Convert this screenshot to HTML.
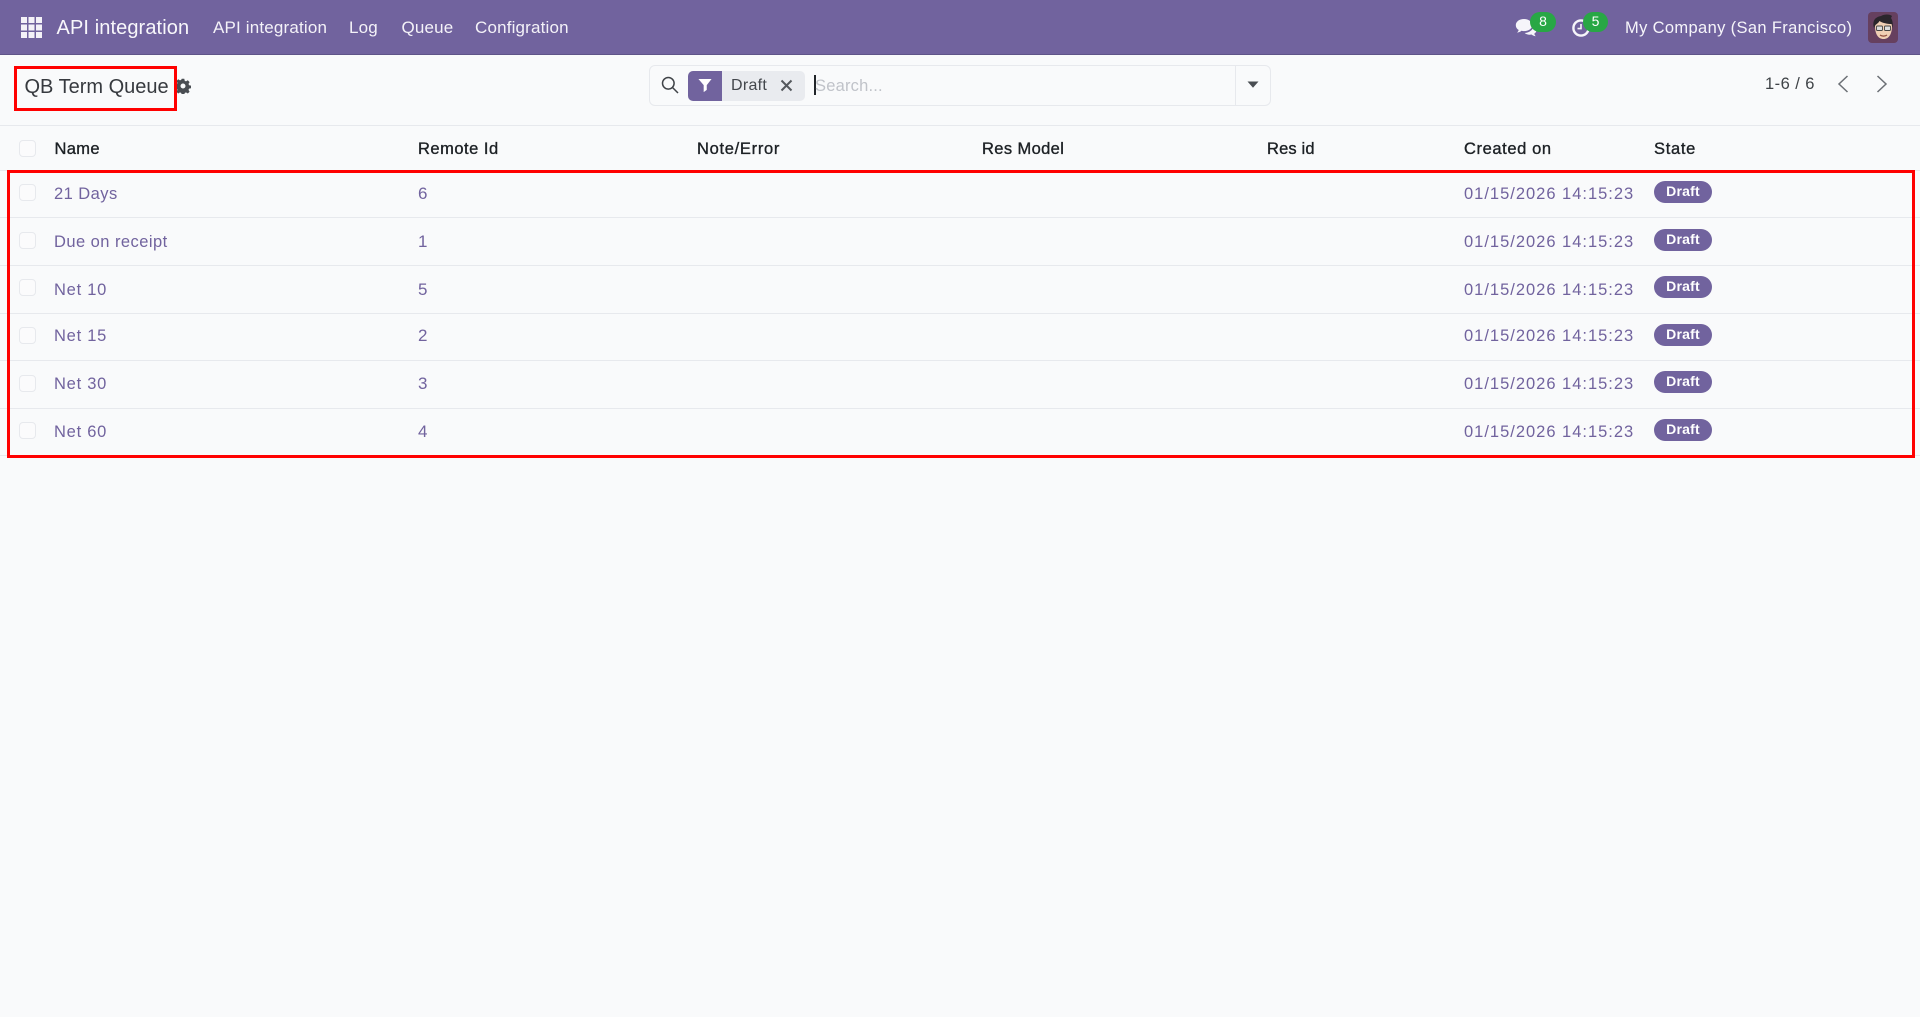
<!DOCTYPE html>
<html lang="en">
<head>
<meta charset="utf-8">
<title>QB Term Queue</title>
<style>
*{box-sizing:border-box}
html,body{margin:0;padding:0}
body{width:1920px;height:1017px;overflow:hidden;background:#f9fafb;font-family:"Liberation Sans",Arial,sans-serif;position:relative;color:#212529}
.t{position:absolute;white-space:nowrap;line-height:24px;height:24px}
.abs{position:absolute}
.nav{position:absolute;left:0;top:0;width:1920px;height:55px;background:#71639e;border-bottom:1px solid #5f5488}
.m{color:#f4f2f8;font-size:17px;letter-spacing:.17px}
.h{font-size:16.5px;letter-spacing:.35px;color:#1d2125;-webkit-text-stroke:.35px #1d2125}
.c{font-size:16.5px;letter-spacing:.45px;color:#71639e}
.n{font-size:16.5px;letter-spacing:.75px;color:#71639e}
.i{font-size:17px;color:#71639e}
.d{font-size:16.5px;letter-spacing:.99px;color:#71639e}
.line{position:absolute;left:0;width:1920px;height:1px;background:#e7e9ed}
.cb{position:absolute;left:19px;width:17px;height:17px;border:1px solid #e7e9ed;border-radius:4px;background:#fbfbfc}
.badge{position:absolute;left:1654px;width:58px;height:22px;border-radius:11px;background:#71639e;color:#fff;font-size:14px;font-weight:bold;line-height:21px;text-align:center;letter-spacing:.2px}
.gb{position:absolute;height:20px;border-radius:10px;background:#28a745;color:#fff;font-size:14px;line-height:19px;text-align:center}
.red{position:absolute;border:3px solid #ff0000;pointer-events:none}
</style>
</head>
<body>
<div class="nav"></div>

<!-- app grid -->
<svg class="abs" style="left:21px;top:17px" width="21" height="21" viewBox="0 0 21 21" fill="#f4f2f8">
<rect x="0" y="0" width="6" height="6"/><rect x="7.500" y="0" width="6" height="6"/><rect x="15" y="0" width="6" height="6"/>
<rect x="0" y="7.500" width="6" height="6"/><rect x="7.500" y="7.500" width="6" height="6"/><rect x="15" y="7.500" width="6" height="6"/>
<rect x="0" y="15" width="6" height="6"/><rect x="7.500" y="15" width="6" height="6"/><rect x="15" y="15" width="6" height="6"/>
</svg>

<span class="t" style="left:56.500px;top:16px;color:#f8f7fb;font-size:20px;letter-spacing:.1px">API integration</span>
<span class="t m" style="left:213px;top:16px">API integration</span>
<span class="t m" style="left:349px;top:16px">Log</span>
<span class="t m" style="left:401.500px;top:16px">Queue</span>
<span class="t m" style="left:475px;top:16px">Configration</span>

<!-- chat icon -->
<svg class="abs" style="left:1515px;top:18px" width="23" height="20" viewBox="0 0 23 20" fill="#f6f5fa">
<path d="M9 1C4.200 1 .8 3.700.8 7.200c0 2 1.100 3.700 2.900 4.800-.3 1-.9 1.900-1.700 2.700 1.700-.2 3.300-.9 4.500-1.900.8.2 1.600.3 2.500.3 4.800 0 8.200-2.700 8.200-5.900S13.800 1 9 1z"/>
<path d="M18.400 7.600c.1 3.900-3.600 7-8.700 7.400 1.200 1.100 3 1.700 5 1.700.6 0 1.200-.1 1.800-.2 1.100.9 2.500 1.500 4.200 1.700-.7-.7-1.200-1.500-1.500-2.400 1.500-1 2.400-2.400 2.400-3.900 0-1.800-1.200-3.300-3-4.300z"/>
</svg>
<div class="gb" style="left:1530px;top:12px;width:26px">8</div>

<!-- clock icon -->
<svg class="abs" style="left:1571px;top:18px" width="20" height="20" viewBox="0 0 20 20" fill="none" stroke="#f6f5fa">
<circle cx="10" cy="10" r="7.600" stroke-width="2.400"/>
<path d="M10 6v4.600H6.500" stroke-width="1.600"/>
</svg>
<div class="gb" style="left:1583px;top:12px;width:25px">5</div>

<span class="t" style="left:1625px;top:16px;color:#f6f5fa;font-size:16.500px;letter-spacing:.35px">My Company (San Francisco)</span>

<!-- avatar -->
<svg class="abs" style="left:1868px;top:12px" width="30" height="31" viewBox="0 0 30 31">
<rect width="30" height="31" rx="4" fill="#66405f"/>
<path d="M7 14c0 8 3 13 8.500 13S24 22 24 14 21 6 15.500 6 7 8 7 14z" fill="#f0cfb4"/>
<path d="M6 16C4 9 7 5 13 4c3-2 9-2 11 0l-1 2c2 3 2 7 1.500 10l-1-4c-4 0-9-1-12-3-1 2-3 3-4 4z" fill="#2a262c"/>
<rect x="8.500" y="14" width="6" height="4.500" rx="1" fill="#ddd" stroke="#444" stroke-width=".9"/>
<rect x="16.500" y="14" width="6" height="4.500" rx="1" fill="#ddd" stroke="#444" stroke-width=".9"/>
<path d="M12 23c2 1.500 5 1.500 7 0" stroke="#8d4b3a" stroke-width="1.200" fill="none"/>
</svg>

<!-- Control panel -->
<span class="t" style="left:24.500px;top:74.500px;font-size:20px;color:#373a3f">QB Term Queue</span>
<svg class="abs" style="left:175px;top:78px" width="16" height="16" viewBox="0 0 16 16" fill="#494d52">
<path fill-rule="evenodd" d="M6.700.8h2.600l.4 2 1.300.6 1.800-1.100 1.800 1.800-1.100 1.800.6 1.300 2 .4v2.600l-2 .4-.6 1.300 1.100 1.800-1.800 1.800-1.800-1.100-1.300.6-.4 2H6.700l-.4-2-1.300-.6-1.800 1.100-1.800-1.800 1.100-1.800-.6-1.300-2-.4V6.600l2-.4.6-1.300-1.100-1.800 1.800-1.800L5 2.400l1.300-.6zM8 5.500a2.500 2.500 0 1 0 0 5 2.500 2.500 0 0 0 0-5z"/>
</svg>

<!-- search box -->
<div class="abs" style="left:649px;top:64.500px;width:622px;height:41px;border:1px solid #e7e9ed;border-radius:6px"></div>
<div class="abs" style="left:1235px;top:65px;width:1px;height:40px;background:#e7e9ed"></div>
<svg class="abs" style="left:661px;top:76px" width="18" height="18" viewBox="0 0 18 18" fill="none" stroke="#3f4347" stroke-width="1.500">
<circle cx="7.300" cy="7.300" r="5.800"/><path d="M11.500 11.500L17 17"/>
</svg>
<div class="abs" style="left:688px;top:71px;width:117px;height:30px;border-radius:5px;background:#e9ebef"></div>
<div class="abs" style="left:688px;top:71px;width:34px;height:30px;border-radius:5px 0 0 5px;background:#71639e"></div>
<svg class="abs" style="left:698px;top:77px" width="14" height="17" viewBox="0 0 16 17" fill="#fff">
<path d="M.5 1h15L10 8v5.500L6.500 16V8z"/>
</svg>
<span class="t" style="left:731px;top:74px;font-size:16px;letter-spacing:.3px;color:#43474c">Draft</span>
<svg class="abs" style="left:780px;top:79px" width="13" height="13" viewBox="0 0 13 13" stroke="#54585d" stroke-width="2" fill="none">
<path d="M1.500 1.500l10 10M11.500 1.500l-10 10"/>
</svg>
<div class="abs" style="left:814px;top:75px;width:1.500px;height:20px;background:#212529"></div>
<span class="t" style="left:815px;top:73.500px;font-size:16.500px;letter-spacing:.2px;color:#c0c3c9">Search...</span>
<svg class="abs" style="left:1247px;top:81px" width="12" height="7" viewBox="0 0 12 7" fill="#494d52"><path d="M.5.500h11L6 6.800z"/></svg>

<!-- pager -->
<span class="t" style="left:1765px;top:72px;font-size:16.500px;letter-spacing:.45px;color:#3f4347">1-6 / 6</span>
<svg class="abs" style="left:1836px;top:75px" width="14" height="18" viewBox="0 0 14 18" fill="none" stroke="#6b6f75" stroke-width="1.500"><path d="M11.500 1L3 9l8.500 8"/></svg>
<svg class="abs" style="left:1875px;top:75px" width="14" height="18" viewBox="0 0 14 18" fill="none" stroke="#6b6f75" stroke-width="1.500"><path d="M2.500 1L11 9l-8.500 8"/></svg>

<div class="line" style="top:125px"></div>

<!-- table header -->
<div class="cb" style="top:140px"></div>
<span class="t h" style="left:54.500px;top:137px">Name</span>
<span class="t h" style="left:418px;top:137px;letter-spacing:.5px">Remote Id</span>
<span class="t h" style="left:697px;top:137px;letter-spacing:.7px">Note/Error</span>
<span class="t h" style="left:982px;top:137px;letter-spacing:.38px">Res Model</span>
<span class="t h" style="left:1267px;top:137px;letter-spacing:.15px">Res id</span>
<span class="t h" style="left:1464px;top:137px;letter-spacing:.6px">Created on</span>
<span class="t h" style="left:1654px;top:137px;letter-spacing:.7px">State</span>
<div class="line" style="top:170px"></div>

<!-- row 1 -->
<div class="cb" style="top:184px"></div>
<span class="t c" style="left:54px;top:182px">21 Days</span>
<span class="t i" style="left:418px;top:182px">6</span>
<span class="t d" style="left:1464px;top:182px">01/15/2026 14:15:23</span>
<div class="badge" style="top:181px">Draft</div>
<div class="line" style="top:217px"></div>

<!-- row 2 -->
<div class="cb" style="top:232px"></div>
<span class="t c" style="left:54px;top:229.500px">Due on receipt</span>
<span class="t i" style="left:418px;top:229.500px">1</span>
<span class="t d" style="left:1464px;top:229.500px">01/15/2026 14:15:23</span>
<div class="badge" style="top:229px">Draft</div>
<div class="line" style="top:265px"></div>

<!-- row 3 -->
<div class="cb" style="top:279px"></div>
<span class="t n" style="left:54px;top:277.500px">Net 10</span>
<span class="t i" style="left:418px;top:277.500px">5</span>
<span class="t d" style="left:1464px;top:277.500px">01/15/2026 14:15:23</span>
<div class="badge" style="top:276px">Draft</div>
<div class="line" style="top:313px"></div>

<!-- row 4 -->
<div class="cb" style="top:327px"></div>
<span class="t n" style="left:54px;top:324px">Net 15</span>
<span class="t i" style="left:418px;top:324px">2</span>
<span class="t d" style="left:1464px;top:324px">01/15/2026 14:15:23</span>
<div class="badge" style="top:324px">Draft</div>
<div class="line" style="top:360px"></div>

<!-- row 5 -->
<div class="cb" style="top:375px"></div>
<span class="t n" style="left:54px;top:372px">Net 30</span>
<span class="t i" style="left:418px;top:372px">3</span>
<span class="t d" style="left:1464px;top:372px">01/15/2026 14:15:23</span>
<div class="badge" style="top:371px">Draft</div>
<div class="line" style="top:408px"></div>

<!-- row 6 -->
<div class="cb" style="top:422px"></div>
<span class="t n" style="left:54px;top:420px">Net 60</span>
<span class="t i" style="left:418px;top:420px">4</span>
<span class="t d" style="left:1464px;top:420px">01/15/2026 14:15:23</span>
<div class="badge" style="top:419px">Draft</div>
<div class="line" style="top:455px"></div>

<!-- red annotations -->
<div class="red" style="left:14px;top:66px;width:163px;height:45px"></div>
<div class="red" style="left:7px;top:170px;width:1908px;height:288px"></div>
</body>
</html>
